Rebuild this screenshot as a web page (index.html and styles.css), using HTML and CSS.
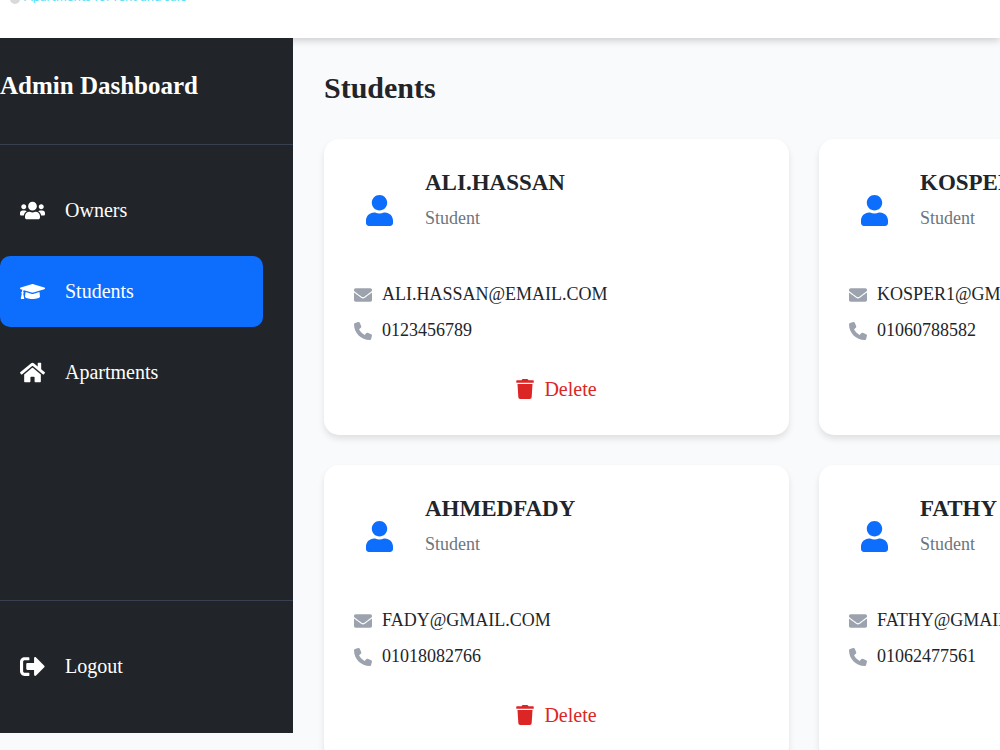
FILE: index.html
```html
<!DOCTYPE html>
<html lang="en">
<head>
  <meta charset="UTF-8">
  <meta name="viewport" content="width=device-width, initial-scale=1.0">
  <title>Admin Dashboard</title>

  <link rel="stylesheet" href="styles.css">

</head>
<body>

  <!-- icons -->
  <svg class="sprite" aria-hidden="true">
    <symbol id="users" viewBox="0 0 640 512"><path d="M96 224c35.3 0 64-28.7 64-64s-28.7-64-64-64-64 28.7-64 64 28.7 64 64 64zm448 0c35.3 0 64-28.7 64-64s-28.7-64-64-64-64 28.7-64 64 28.7 64 64 64zm32 32h-64c-17.6 0-33.5 7.1-45.1 18.6 40.3 22.1 68.9 62 75.1 109.4h66c17.7 0 32-14.3 32-32v-32c0-35.3-28.7-64-64-64zm-256 0c61.9 0 112-50.1 112-112S381.9 32 320 32 208 82.1 208 144s50.1 112 112 112zm76.8 32h-8.3c-20.8 10-43.9 16-68.5 16s-47.6-6-68.5-16h-8.3C179.6 288 128 339.6 128 403.2V432c0 26.5 21.5 48 48 48h288c26.5 0 48-21.5 48-48v-28.8c0-63.6-51.6-115.2-115.2-115.2zm-223.7-13.4C161.5 263.1 145.6 256 128 256H64c-35.3 0-64 28.7-64 64v32c0 17.7 14.3 32 32 32h65.9c6.3-47.4 34.9-87.3 75.2-109.4z"/></symbol>
    <symbol id="graduation" viewBox="0 0 640 512"><path d="M622.34 153.2L343.4 67.5c-15.2-4.67-31.6-4.67-46.79 0L17.66 153.2c-23.54 7.23-23.54 38.36 0 45.59l48.63 14.94c-10.67 13.19-17.23 29.28-17.88 46.9C38.78 266.15 32 276.11 32 288c0 10.78 5.68 19.85 13.86 25.65L20.33 428.53C18.11 438.52 25.71 448 35.94 448h56.11c10.24 0 17.84-9.48 15.62-19.47L82.14 313.65C90.32 307.85 96 298.78 96 288c0-11.57-6.47-21.25-15.66-26.87.76-15.02 8.44-28.3 20.69-36.72L296.6 284.5c9.06 2.78 26.44 6.25 46.79 0l278.95-85.7c23.55-7.24 23.55-38.36 0-45.6zM352.79 315.09c-28.53 8.76-52.84 3.92-65.59 0l-145.02-44.55L128 384c0 35.35 85.96 64 192 64s192-28.65 192-64l-14.18-113.47-145.03 44.56z"/></symbol>
    <symbol id="home" viewBox="0 0 576 512"><path d="M280.37 148.26L96 300.11V464a16 16 0 0 0 16 16l112.06-.29a16 16 0 0 0 15.92-16V368a16 16 0 0 1 16-16h64a16 16 0 0 1 16 16v95.64a16 16 0 0 0 16 16.05L464 480a16 16 0 0 0 16-16V300L295.67 148.26a12.19 12.19 0 0 0-15.3 0zM571.6 251.47L488 182.56V44.05a12 12 0 0 0-12-12h-56a12 12 0 0 0-12 12v72.61L318.47 43a48 48 0 0 0-61 0L4.34 251.47a12 12 0 0 0-1.6 16.9l25.5 31A12 12 0 0 0 45.15 301l235.22-193.74a12.19 12.19 0 0 1 15.3 0L530.9 301a12 12 0 0 0 16.9-1.6l25.5-31a12 12 0 0 0-1.7-16.93z"/></symbol>
    <symbol id="sign-out" viewBox="0 0 512 512"><path d="M497 273L329 441c-15 15-41 4.5-41-17v-96H152c-13.3 0-24-10.7-24-24v-96c0-13.3 10.7-24 24-24h136V88c0-21.4 25.9-32 41-17l168 168c9.3 9.4 9.3 24.6 0 34zM192 436v-40c0-6.6-5.4-12-12-12H96c-17.7 0-32-14.3-32-32V160c0-17.7 14.3-32 32-32h84c6.6 0 12-5.4 12-12V76c0-6.6-5.4-12-12-12H96c-53 0-96 43-96 96v192c0 53 43 96 96 96h84c6.6 0 12-5.4 12-12z"/></symbol>
    <symbol id="user" viewBox="0 0 448 512"><path d="M224 256c70.7 0 128-57.3 128-128S294.7 0 224 0 96 57.3 96 128s57.3 128 128 128zm89.6 32h-16.7c-22.2 10.2-46.9 16-72.9 16s-50.6-5.8-72.9-16h-16.7C60.2 288 0 348.2 0 422.4V464c0 26.5 21.5 48 48 48h352c26.5 0 48-21.5 48-48v-41.6c0-74.2-60.2-134.4-134.4-134.4z"/></symbol>
    <symbol id="envelope" viewBox="0 0 512 512"><path d="M502.3 190.8c3.9-3.1 9.7-.2 9.7 4.7V400c0 26.5-21.5 48-48 48H48c-26.5 0-48-21.5-48-48V195.6c0-5 5.7-7.8 9.7-4.7 22.4 17.4 52.1 39.5 154.1 113.6 21.1 15.4 56.7 47.8 92.2 47.6 35.7.3 72-32.8 92.3-47.6 102-74.1 131.6-96.3 154-113.7zM256 320c23.2.4 56.6-29.2 73.4-41.4 132.7-96.3 142.8-104.7 173.4-128.7 5.8-4.5 9.2-11.5 9.2-18.9v-19c0-26.5-21.5-48-48-48H48c-26.5 0-48 21.5-48 48v19c0 7.4 3.4 14.3 9.2 18.9 30.6 23.9 40.7 32.4 173.4 128.7 16.8 12.2 50.2 41.8 73.4 41.4z"/></symbol>
    <symbol id="phone" viewBox="0 0 512 512"><path d="M164.9 24.6c-7.7-18.6-28-28.5-47.4-23.2l-88 24C12.1 30.2 0 46 0 64C0 311.4 200.6 512 448 512c18 0 33.8-12.1 38.6-29.5l24-88c5.3-19.4-4.6-39.7-23.2-47.4l-96-40c-16.3-6.8-35.2-2.1-46.3 11.6L304.7 368C234.3 334.7 177.3 277.7 144 207.3L193.3 167c13.7-11.2 18.4-30 11.6-46.3l-40-96z"/></symbol>
    <symbol id="trash" viewBox="0 0 448 512"><path d="M432 32H312l-9.4-18.7A24 24 0 0 0 281.1 0H166.8a23.72 23.72 0 0 0-21.4 13.3L136 32H16A16 16 0 0 0 0 48v32a16 16 0 0 0 16 16h416a16 16 0 0 0 16-16V48a16 16 0 0 0-16-16zM53.2 467a48 48 0 0 0 47.9 45h245.8a48 48 0 0 0 47.9-45L416 128H32z"/></symbol>
  </svg>

  <header class="topbar">
    <div class="logo">
      <span class="logo-mark"></span>
      <span>Apartments for rent and sale</span>
    </div>
  </header>

  <div class="layout">
    <aside class="sidebar">
      <h2 class="sidebar-title">Admin Dashboard</h2>
      <nav class="sidebar-nav">
        <a class="nav-item" href="#owners"><svg class="nav-icon"><use href="#users"/></svg>Owners</a>
        <a class="nav-item active" href="#students"><svg class="nav-icon"><use href="#graduation"/></svg>Students</a>
        <a class="nav-item" href="#apartments"><svg class="nav-icon"><use href="#home"/></svg>Apartments</a>
      </nav>
      <div class="sidebar-footer">
        <button class="nav-item" type="button"><svg class="nav-icon"><use href="#sign-out"/></svg>Logout</button>
      </div>
    </aside>

    <main class="content">
      <h1 class="page-title">Students</h1>

      <div class="cards">
        <article class="card">
          <div class="card-header">
            <div class="avatar"><svg class="avatar-icon"><use href="#user"/></svg></div>
            <div class="card-info">
              <h3 class="name">ALI.HASSAN</h3>
              <p class="role">Student</p>
            </div>
          </div>
          <div class="contacts">
            <p class="contact"><svg class="contact-icon"><use href="#envelope"/></svg>ALI.HASSAN@EMAIL.COM</p>
            <p class="contact"><svg class="contact-icon"><use href="#phone"/></svg>0123456789</p>
          </div>
          <button class="delete-btn" type="button"><svg class="delete-icon"><use href="#trash"/></svg>Delete</button>
        </article>

        <article class="card">
          <div class="card-header">
            <div class="avatar"><svg class="avatar-icon"><use href="#user"/></svg></div>
            <div class="card-info">
              <h3 class="name">KOSPER1</h3>
              <p class="role">Student</p>
            </div>
          </div>
          <div class="contacts">
            <p class="contact"><svg class="contact-icon"><use href="#envelope"/></svg>KOSPER1@GMAIL.COM</p>
            <p class="contact"><svg class="contact-icon"><use href="#phone"/></svg>01060788582</p>
          </div>
          <button class="delete-btn" type="button"><svg class="delete-icon"><use href="#trash"/></svg>Delete</button>
        </article>

        <article class="card">
          <div class="card-header">
            <div class="avatar"><svg class="avatar-icon"><use href="#user"/></svg></div>
            <div class="card-info">
              <h3 class="name">AHMEDFADY</h3>
              <p class="role">Student</p>
            </div>
          </div>
          <div class="contacts">
            <p class="contact"><svg class="contact-icon"><use href="#envelope"/></svg>FADY@GMAIL.COM</p>
            <p class="contact"><svg class="contact-icon"><use href="#phone"/></svg>01018082766</p>
          </div>
          <button class="delete-btn" type="button"><svg class="delete-icon"><use href="#trash"/></svg>Delete</button>
        </article>

        <article class="card">
          <div class="card-header">
            <div class="avatar"><svg class="avatar-icon"><use href="#user"/></svg></div>
            <div class="card-info">
              <h3 class="name">FATHY</h3>
              <p class="role">Student</p>
            </div>
          </div>
          <div class="contacts">
            <p class="contact"><svg class="contact-icon"><use href="#envelope"/></svg>FATHY@GMAIL.COM</p>
            <p class="contact"><svg class="contact-icon"><use href="#phone"/></svg>01062477561</p>
          </div>
          <button class="delete-btn" type="button"><svg class="delete-icon"><use href="#trash"/></svg>Delete</button>
        </article>
      </div>
    </main>
  </div>

</body>
</html>
```
FILE: styles.css
```css
* {
  box-sizing: border-box;
  margin: 0;
  padding: 0;
}

html {
  scrollbar-width: none;
}

body {
  overflow-x: hidden;
  background-color: #f9fafb;
  color: #212529;
  font-family: "Liberation Serif", "Times New Roman", serif;
}

svg {
  display: block;
  fill: currentColor;
}

.sprite {
  display: none;
}

/* topbar */
.topbar {
  position: relative;
  display: flex;
  align-items: flex-end;
  height: 38px;
  padding: 0 10px 34px;
  background-color: #fff;
  box-shadow: 0 2px 8px rgba(0, 0, 0, 0.2);
  clip-path: inset(0 0 -12px 0);
}

.logo {
  display: flex;
  align-items: flex-end;
  gap: 4px;
  color: #5ce1f5;
  font-family: Lato, sans-serif;
  font-size: 13px;
  line-height: 16px;
}

.logo-mark {
  width: 10px;
  height: 16px;
  border-radius: 0 0 5px 5px;
  background-color: #d9d9d9;
}

/* layout */
.layout {
  display: flex;
  align-items: flex-start;
}

.sidebar {
  position: relative;
  display: flex;
  flex-direction: column;
  flex: 0 0 293px;
  min-height: calc(100vh - 55px);
  background-color: #212529;
  color: #fff;
}

.sidebar-title {
  padding: 30px 0 40px;
  border-bottom: 1px solid #374151;
  font-size: 25px;
  line-height: 36px;
}

.sidebar-nav {
  display: flex;
  flex: 1;
  flex-direction: column;
  gap: 10px;
  padding: 30px 30px 30px 0;
}

.nav-item {
  display: flex;
  align-items: center;
  gap: 20px;
  width: 100%;
  padding: 20px;
  border: none;
  border-radius: 10px;
  background: none;
  color: #fff;
  font-family: inherit;
  font-size: 20px;
  line-height: 31px;
  text-decoration: none;
  cursor: pointer;
}

.nav-item.active {
  background-color: #0d6efd;
}

.nav-icon {
  width: 25px;
  height: 25px;
}

.sidebar-footer {
  padding: 30px 30px 31px 0;
  border-top: 1px solid #374151;
}

/* content */
.content {
  flex: 1;
  min-width: 0;
  padding: 31px;
}

.page-title {
  margin-bottom: 32px;
  font-size: 30px;
  line-height: 38px;
}

.cards {
  display: grid;
  grid-template-columns: repeat(2, minmax(465px, 1fr));
  gap: 30px;
}

.card {
  display: flex;
  flex-direction: column;
  gap: 30px;
  padding: 30px 30px 31px;
  border-radius: 15px;
  background-color: #fff;
  box-shadow: 0 4px 6px rgba(0, 0, 0, 0.1);
}

.card-header {
  display: flex;
  align-items: center;
  gap: 21px;
}

.avatar {
  display: flex;
  justify-content: center;
  width: 50px;
  color: #0d6efd;
}

.avatar-icon {
  width: 27px;
  height: 31px;
}

.card-info {
  padding-bottom: 19px;
}

.name {
  margin-bottom: 8px;
  font-size: 23px;
  line-height: 28px;
}

.role {
  color: #6c757d;
  font-size: 18px;
  line-height: 27px;
}

.contacts {
  display: flex;
  flex-direction: column;
  gap: 9px;
}

.contact {
  display: flex;
  align-items: center;
  gap: 10px;
  font-size: 18px;
  line-height: 27px;
}

.contact-icon {
  width: 18px;
  height: 18px;
  color: #9ca3af;
}

.delete-btn {
  display: flex;
  align-items: center;
  align-self: center;
  gap: 10px;
  border: none;
  background: none;
  color: #dc2626;
  font-family: inherit;
  font-size: 20px;
  line-height: 30px;
  cursor: pointer;
}

.delete-icon {
  width: 18px;
  height: 20px;
}
```
